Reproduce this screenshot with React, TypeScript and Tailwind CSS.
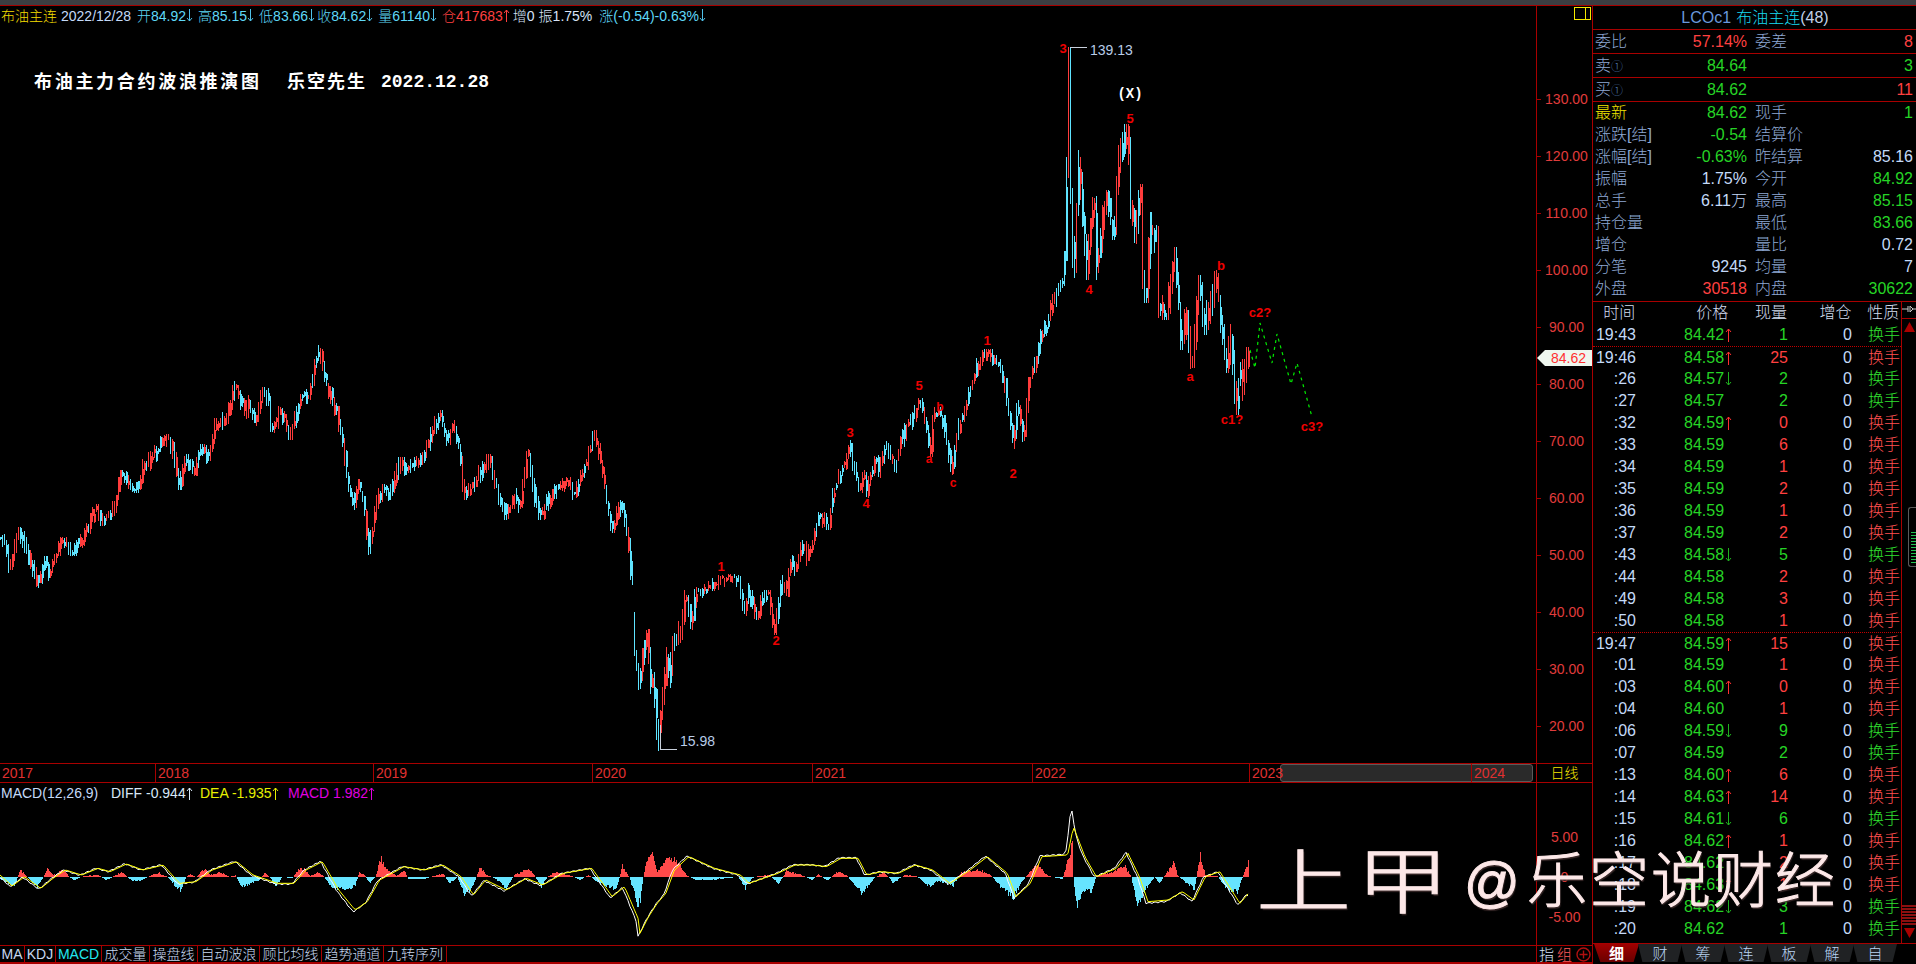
import React from "react";

type P = [number, number];

const pricePts: P[] = [
  [0,537],[8,547],[10,570],[20,530],[29,553],[39,585],[47,557],[50,575],[57,557],[63,540],[73,553],[84,540],[98,507],[104,523],[116,507],[122,473],[131,490],[141,490],[143,470],[157,453],[169,437],[175,453],[180,487],[188,457],[196,473],[202,447],[211,458],[216,423],[227,420],[237,383],[247,417],[249,400],[257,423],[263,390],[269,397],[273,432],[282,410],[291,437],[302,397],[310,397],[320,348],[327,383],[337,410],[345,447],[349,483],[355,507],[359,480],[365,503],[370,552],[378,503],[384,487],[390,497],[402,460],[408,470],[424,457],[441,413],[449,443],[455,423],[461,450],[465,497],[473,487],[490,457],[496,480],[506,517],[516,497],[521,510],[529,447],[535,493],[541,517],[555,490],[571,480],[575,497],[588,460],[596,433],[604,470],[608,503],[613,530],[623,500],[630,547],[633,582],
  [634,615],[636,650],[640,687],[648,633],[650,660],[647,697],[655,677],[659,748],[668,657],[672,675],[675,637],[682,630],[687,593],[692,627],[697,590],[703,593],[715,585],[723,578],[737,577],[740,580],[745,615],[750,593],[759,617],[763,593],[770,595],[776,632],[782,583],[787,593],[792,562],[795,572],[805,543],[808,558],[813,547],[820,515],[830,527],[833,500],[840,477],[847,462],[852,443],[853,457],[861,495],[865,468],[868,488],[877,455],[880,475],[887,443],[896,470],[902,443],[908,427],[923,401],[932,455],[933,420],[940,410],[947,433],[952,472],[960,427],[978,367],[987,352],[1002,367],[1007,393],[1015,448],[1018,403],[1025,443],[1030,383],[1037,363],[1042,332],[1048,327],[1052,307],[1058,293],[1062,287],[1065,280],[1067,227],[1070,47],[1071,157],[1075,287],[1080,160],[1088,277],[1095,187],[1098,270],[1107,193],[1115,237],[1120,153],[1129,127],[1132,203],[1136,240],[1142,187],[1143,277],[1148,300],[1151,228],[1158,237],[1160,310],[1168,317],[1176,250],[1183,347],[1188,313],[1193,370],[1200,278],[1205,332],[1213,297],[1217,273],[1222,317],[1227,370],[1232,337],[1238,412],[1241,367],[1244,393],[1248,350],
];

const histPts: P[] = [
  [0,-2],[14,-9],[20,7],[27,0],[37,-10],[43,0],[47,8],[53,2],[63,7],[69,0],[73,-3],[84,1],[98,2],[106,-3],[116,2],[122,5],[127,0],[131,-3],[141,-4],[151,2],[159,4],[167,0],[180,-14],[186,0],[190,3],[196,0],[204,8],[210,2],[220,5],[229,0],[235,2],[241,-10],[249,-7],[259,-3],[265,5],[271,-2],[275,-10],[282,0],[292,-1],[298,8],[304,8],[310,1],[318,5],[324,0],[331,-10],[339,-12],[347,-13],[355,-8],[359,5],[365,1],[369,-6],[375,0],[380,19],[386,8],[396,1],[404,7],[408,-2],[424,-2],[433,1],[443,3],[449,-7],[457,0],[465,-20],[473,-8],[480,11],[486,2],[492,0],[500,-5],[506,-12],[514,2],[522,5],[529,9],[535,0],[541,-10],[547,0],[555,5],[571,1],[580,-3],[588,2],[600,-7],[608,-10],[616,-12],[622,11],[629,0],[637,-27],[640,-22],[643,0],[646,15],[651,24],[657,5],[666,17],[674,18],[686,2],[695,-3],[709,-3],[726,-1],[738,0],[745,-11],[752,-1],[758,1],[769,2],[778,-7],[786,6],[801,2],[812,-3],[818,3],[827,-4],[838,6],[847,1],[861,-16],[870,-6],[875,0],[884,5],[893,-6],[904,2],[916,1],[930,-10],[936,-4],[941,-5],[953,-8],[961,5],[979,7],[990,2],[999,-8],[1013,-20],[1022,-4],[1036,13],[1048,1],[1062,-2],[1068,19],[1072,35],[1073,0],[1076,-30],[1082,-14],[1091,-15],[1096,1],[1108,4],[1125,10],[1131,0],[1137,-28],[1145,-12],[1154,0],[1159,-6],[1174,15],[1177,2],[1185,-5],[1194,-12],[1200,22],[1205,2],[1217,1],[1225,-10],[1237,-16],[1243,2],[1248,15],
];

const z4: P[] = [[0,345],[30,378],[60,350],[100,385],[130,355],[160,330],[200,345],[240,325],[270,335],[310,312],[350,330],[400,315],[440,370],[480,365],[520,330],[580,305],[620,345],[680,370],[720,370],[750,330],[790,305],[830,390],[870,450],[900,425],[930,360],[990,320],[1040,330],[1085,315],[1130,350],[1160,405],[1190,360],[1240,390],[1290,355],[1330,375],[1380,340],[1450,325],[1500,410],[1530,380],[1565,480]];
const z5: P[] = [[0,520],[15,470],[30,430],[45,400],[60,330],[85,290],[130,325],[175,345],[190,370],[240,340],[270,315],[300,315],[325,320],[350,295],[380,295],[395,345],[420,335],[450,340],[480,315],[510,330],[540,370],[575,330],[605,290],[640,340],[655,410],[680,370],[700,290],[745,285],[755,200],[775,290],[795,350],[830,325],[850,280],[870,350],[885,425],[920,420],[945,395],[965,420],[985,350],[1010,335],[1045,430],[1060,400]];
const deaPts: P[] = [
  ...z4.map(([a, b]): P => [a / 2.45, 760 + b / 3]),
  ...z5.map(([a, b]): P => [640 + a / 1.742, 760 + b / 3]),
];

function lerp(pts: P[], x: number): number {
  if (x <= pts[0][0]) return pts[0][1];
  for (let i = 1; i < pts.length; i++) {
    if (x <= pts[i][0]) {
      const [x0, y0] = pts[i - 1];
      const [x1, y1] = pts[i];
      return y0 + ((y1 - y0) * (x - x0)) / Math.max(x1 - x0, 0.001);
    }
  }
  return pts[pts.length - 1][1];
}

function rng(start: number) {
  let seed = start;
  return () => {
    seed = (seed * 1664525 + 1013904223) >>> 0;
    return seed / 4294967296;
  };
}

function makeCandles() {
  const rnd = rng(12345);
  let redW = "";
  let cyanW = "";
  let redB = "";
  let cyanB = "";
  for (let x = 0; x <= 1248; x += 2) {
    const c = lerp(pricePts, x);
    const next = x === 632 ? lerp(pricePts, 633) : lerp(pricePts, x + 2);
    let lo = Infinity;
    let hi = -Infinity;
    const left = x >= 634 ? Math.max(634, x - 8) : x - 8;
    const right = x < 634 ? Math.min(633, x + 8) : x + 8;
    for (let k = left; k <= right; k++) {
      const v = lerp(pricePts, k);
      if (v < lo) lo = v;
      if (v > hi) hi = v;
    }
    const amp = x > 1065 ? 20 : x > 640 && x < 700 ? 14 : 10;
    const isExtreme = x > 1060 && x < 1080;
    const up = Math.max(Math.min(c, next) - rnd() * amp, lo - (isExtreme ? 0 : 3));
    const dn = Math.min(Math.max(c, next) + rnd() * amp, hi + (isExtreme ? 0 : 3));
    const rising = next < c;
    const isRed = rnd() < (rising ? 0.68 : 0.3);
    const wick = `M${x + 0.5} ${up.toFixed(0)}V${dn.toFixed(0)}`;
    const m = up + (dn - up) * (0.3 + rnd() * 0.4);
    const h = (dn - up) * (0.15 + rnd() * 0.25);
    const body = rnd() < 0.7 ? `M${x + 1} ${(m - h).toFixed(0)}V${(m + h).toFixed(0)}` : "";
    if (isRed) {
      redW += wick;
      redB += body;
    } else {
      cyanW += wick;
      cyanB += body;
    }
  }
  return { redW, cyanW, redB, cyanB };
}

function makeHist() {
  const rnd = rng(777);
  let red = "";
  let cyan = "";
  for (let x = 0; x <= 1248; x++) {
    const base = lerp(histPts, x);
    const v = Math.round(base * (0.8 + rnd() * 0.4));
    if (v > 0) red += `M${x + 0.5} 877V${877 - v}`;
    else if (v < 0) cyan += `M${x + 0.5} 877V${877 - v}`;
  }
  return { red, cyan };
}

function makeLines() {
  let dea = "";
  let diff = "";
  for (let x = 0; x <= 1248; x += 2) {
    const d = lerp(deaPts, x);
    dea += `${x === 0 ? "M" : "L"}${x} ${d.toFixed(1)}`;
    const lead = lerp(deaPts, Math.min(x + 2, 1248));
    const bump = 16 * Math.exp(-((x - 1071) ** 2) / 12);
    const w = 877 + (lead - 877) * 1.05 - bump + (x % 6 === 0 ? 1 : 0);
    diff += `${x === 0 ? "M" : "L"}${x} ${w.toFixed(1)}`;
  }
  return { dea, diff };
}

const candles = makeCandles();
const hist = makeHist();
const lines = makeLines();

const marks: [string, number, number, number][] = [
  ["3", 1063, 48, 13], ["5", 1130, 118, 13], ["4", 1089, 289, 13], ["b", 1221, 265, 13], ["c2?", 1260, 312, 13],
  ["a", 1190, 376, 13], ["c1?", 1232, 419, 13], ["c3?", 1312, 426, 13], ["1", 721, 566, 13], ["2", 776, 640, 13],
  ["3", 850, 432, 13], ["4", 866, 503, 13], ["a", 929, 458, 12], ["c", 953, 482, 12], ["2", 1013, 473, 13],
  ["5", 919, 385, 13], ["b", 940, 406, 12], ["1", 987, 340, 13],
];

const R = "text-[#ff4040]";
const G = "text-[#26d426]";
const B = "text-[#c4daf8]";
const L = "text-[#8ea8d4]";

function Arr({ dir, color, h = 13 }: { dir: "u" | "d"; color: string; h?: number }) {
  return (
    <svg className="inline-block shrink-0 align-[-2px]" width={7} height={h} viewBox={`0 0 7 ${h}`} fill="none" stroke={color} strokeWidth={1}>
      {dir === "u" ? (
        <path d={`M3.5 ${h}V1M1 4L3.5 1L6 4`} />
      ) : (
        <path d={`M3.5 0V${h - 1}M1 ${h - 4}L3.5 ${h - 1}L6 ${h - 4}`} />
      )}
    </svg>
  );
}

function QuoteRow({ a, b, ac = L, bc = B, c, d, dc = B, cc = L }: { a: React.ReactNode; b?: string; ac?: string; bc?: string; c?: string; d?: string; dc?: string; cc?: string }) {
  return (
    <div className="flex h-[22px] items-center pl-[2px] pr-[4px] text-[16px]">
      <div className="flex w-[152px] justify-between">
        <span className={ac}>{a}</span>
        <span className={bc}>{b}</span>
      </div>
      <div className="ml-[8px] flex flex-1 justify-between">
        <span className={cc}>{c}</span>
        <span className={dc}>{d}</span>
      </div>
    </div>
  );
}

function BandRow({ a, b, bc, d, dc, c }: { a: React.ReactNode; b: string; bc: string; d: string; dc: string; c?: string }) {
  return (
    <div className="flex h-[24px] items-center border-b border-[#a80000] pl-[2px] pr-[4px] text-[16px]">
      <div className="flex w-[152px] justify-between">
        <span className={L}>{a}</span>
        <span className={bc}>{b}</span>
      </div>
      <div className="ml-[8px] flex flex-1 justify-between">
        <span className={L}>{c}</span>
        <span className={dc}>{d}</span>
      </div>
    </div>
  );
}

type Tick = [string, string, "u" | "d" | "", string, boolean, boolean?];
const ticks: Tick[] = [
  ["19:43", "84.42", "u", "1", false],
  ["19:46", "84.58", "u", "25", true, true],
  [":26", "84.57", "d", "2", false],
  [":27", "84.57", "", "2", false],
  [":32", "84.59", "u", "0", true],
  [":33", "84.59", "", "6", true],
  [":34", "84.59", "", "1", true],
  [":35", "84.59", "", "2", true],
  [":36", "84.59", "", "1", true],
  [":37", "84.59", "", "2", true],
  [":43", "84.58", "d", "5", false],
  [":44", "84.58", "", "2", true],
  [":49", "84.58", "", "3", true],
  [":50", "84.58", "", "1", true],
  ["19:47", "84.59", "u", "15", true, true],
  [":01", "84.59", "", "1", true],
  [":03", "84.60", "u", "0", true],
  [":04", "84.60", "", "1", true],
  [":06", "84.59", "d", "9", false],
  [":07", "84.59", "", "2", false],
  [":13", "84.60", "u", "6", true],
  [":14", "84.63", "u", "14", true],
  [":15", "84.61", "d", "6", false],
  [":16", "84.62", "u", "1", true],
  [":17", "84.62", "", "2", true],
  [":18", "84.63", "u", "1", true],
  [":19", "84.62", "d", "3", false],
  [":20", "84.62", "", "1", false],
];

function TickRow({ t }: { t: Tick }) {
  const [time, price, arrow, vol, red, dotted] = t;
  return (
    <div className={`flex h-[22px] items-center text-[16px] ${dotted ? "border-t border-dotted border-[#c00000]" : ""}`}>
      <span className={`w-[43px] text-right ${B}`}>{time}</span>
      <span className={`ml-[48px] flex w-[58px] items-center ${G}`}>
        {price}
        {arrow === "u" && <span className="ml-[1px] flex"><Arr dir="u" color="#ff3030" h={14} /></span>}
        {arrow === "d" && <span className="ml-[1px] flex"><Arr dir="d" color="#1fb01f" h={14} /></span>}
      </span>
      <span className={`w-[46px] text-right ${red ? R : G}`}>{vol}</span>
      <span className={`w-[64px] text-right ${B}`}>0</span>
      <span className={`ml-[16px] w-[32px] whitespace-nowrap ${red ? "text-[#ff5050]" : "text-[#30e030]"}`}>换手</span>
    </div>
  );
}

function Head({ label, value, vc = "text-[#5fd8f8]", lc = "text-[#5fd8f8]", arrow, ac = "#4fc0e8", ml = "" }: { label: string; value: string; vc?: string; lc?: string; arrow?: "u" | "d"; ac?: string; ml?: string }) {
  return (
    <span className={`flex items-center whitespace-nowrap ${ml}`}>
      <span className={lc}>{label}</span>
      <span className={vc}>{value}</span>
      {arrow && <Arr dir={arrow} color={ac} />}
    </span>
  );
}

const years: [string, string][] = [
  ["2017", "w-[156px]"], ["2018", "w-[218px]"], ["2019", "w-[219px]"], ["2020", "w-[220px]"],
  ["2021", "w-[220px]"], ["2022", "w-[217px]"], ["2023", "w-[222px]"], ["2024", "flex-1"],
];

const bottomTabs: [string, string, string?][] = [
  ["MA", "w-[25px]"], ["KDJ", "w-[31px]"], ["MACD", "w-[46px]", "text-[#22e8f0]"], ["成交量", "w-[48px]"], ["操盘线", "w-[48px]"],
  ["自动波浪", "w-[62px]"], ["顾比均线", "w-[62px]"], ["趋势通道", "w-[62px]"], ["九转序列", "w-[63px]"],
];

export default function App() {
  return (
    <div className="relative flex h-[964px] w-[1916px] flex-col overflow-hidden bg-black font-['Liberation_Sans','Noto_Sans_CJK_SC',sans-serif] text-[14px] font-light leading-none">
      <div className="h-[5px] shrink-0 bg-[#3b3e42]" />
      <div className="flex flex-1 border-t border-[#a80000]">
        {/* left */}
        <div className="flex w-[1592px] shrink-0 flex-col">
          <div className="flex h-[757px]">
            <div className="relative w-[1536px] shrink-0">
              <svg className="absolute left-0 top-0" width={1536} height={757} viewBox="0 6 1536 757">
                <g shapeRendering="crispEdges" fill="none">
                  <path d={candles.redW} stroke="#ff3c3c" strokeWidth={1} />
                  <path d={candles.cyanW} stroke="#5fe4ff" strokeWidth={1} />
                  <path d={candles.redB} stroke="#ff3c3c" strokeWidth={2} />
                  <path d={candles.cyanB} stroke="#5fe4ff" strokeWidth={2} />
                  <path d="M1070 47H1087" stroke="#c8d0dc" strokeWidth={1} />
                  <path d="M660 749H677M660 749V725" stroke="#c8d0dc" strokeWidth={1} />
                </g>
                <polyline points="1250,350 1255,368 1260,323 1272,363 1277,334 1291,384 1297,363 1312,417" fill="none" stroke="#00ea00" strokeWidth={1.2} strokeDasharray="3 4" />
                {marks.map(([t, x, y, s], i) => (
                  <text key={i} x={x} y={y + 5} textAnchor="middle" fontSize={s} fontWeight={700} fill="#f00000" fontFamily="'Liberation Sans',sans-serif">{t}</text>
                ))}
                <text x={1130} y={98} textAnchor="middle" fontSize={14} fontWeight={700} fill="#ffffff" fontFamily="'Liberation Mono',monospace">(X)</text>
                <text x={1090} y={55} fontSize={14} fill="#b8cce8" fontFamily="'Liberation Sans',sans-serif">139.13</text>
                <text x={680} y={746} fontSize={14} fill="#b8cce8" fontFamily="'Liberation Sans',sans-serif">15.98</text>
              </svg>
              <div className="relative flex h-[19px] items-center pl-[1px]">
                <Head label="布油主连" value="" lc="text-[#f2dc00]" />
                <span className={`ml-[4px] w-[76px] ${B}`}>2022/12/28</span>
                <Head label="开" value="84.92" arrow="d" />
                <Head label="高" value="85.15" arrow="d" ml="ml-[5px]" />
                <Head label="低" value="83.66" arrow="d" ml="ml-[5px]" />
                <Head label="收" value="84.62" arrow="d" ml="ml-[2px]" />
                <Head label="量" value="61140" arrow="d" ml="ml-[5px]" />
                <Head label="仓" value="417683" lc="text-[#ff4040]" vc="text-[#ff4040]" arrow="u" ac="#ff4040" ml="ml-[5px]" />
                <Head label="增" value="0" lc="text-[#d8e4f8]" vc="text-[#d8e4f8]" ml="ml-[3px]" />
                <Head label="振" value="1.75%" lc="text-[#d8e4f8]" vc="text-[#d8e4f8]" ml="ml-[4px]" />
                <Head label="涨" value="(-0.54)-0.63%" arrow="d" ml="ml-[7px]" />
              </div>
              <div className="relative ml-[34px] mt-[47px] flex h-[20px] items-center whitespace-nowrap text-[18px] font-bold text-white">
                <span className="w-[253px] tracking-[2.7px]">布油主力合约波浪推演图</span>
                <span className="w-[94px] tracking-[2px]">乐空先生</span>
                <span className="font-['Liberation_Mono',monospace]">2022.12.28</span>
              </div>
            </div>
            <div className="relative flex flex-1 flex-col border-l border-[#a80000] text-[14px] text-[#e03c3c]">
              <div className="flex h-[64.5px] justify-end pr-[1px] pt-[1px]">
                <div className="flex h-[13px] w-[17px] justify-end border border-[#f5e600]">
                  <div className="h-full w-[5px] border-l border-[#f5e600]" />
                </div>
              </div>
              {["130.00", "120.00", "110.00", "100.00", "90.00", "80.00", "70.00", "60.00", "50.00", "40.00", "30.00", "20.00"].map((t) => (
                <div key={t} className="flex h-[57px] shrink-0 items-center">
                  <div className="h-px w-[4px] bg-[#a80000]" />
                  <span className="flex-1 text-center">{t}</span>
                </div>
              ))}
              <div className="absolute left-0 top-[344px] flex h-[16px] w-[55px] items-center justify-center bg-[#eef6ee] pl-[8px] text-[14px] text-[#ff3030] [clip-path:polygon(0_50%,8px_0,100%_0,100%_100%,8px_100%)]">84.62</div>
            </div>
          </div>
          {/* time axis */}
          <div className="relative flex h-[20px] shrink-0 border-y border-[#a80000]">
            <div className="relative flex w-[1536px] shrink-0 overflow-hidden">
              <div className="absolute right-[3px] top-0 h-[18px] w-[253px] rounded-[3px] border border-[#5a5a5a] bg-[#2a2a2a]" />
              {years.map(([y, w], i) => (
                <span key={y} className={`relative flex items-center pl-[2px] text-[14px] text-[#e03030] ${w} ${i < 7 ? "border-r border-[#a80000]" : ""}`}>{y}</span>
              ))}
            </div>
            <div className="flex flex-1 items-center justify-center border-l border-[#a80000] text-[14px] text-[#f5e600]">日线</div>
          </div>
          {/* macd */}
          <div className="flex h-[162px] shrink-0">
            <div className="relative w-[1536px] shrink-0">
              <svg className="absolute left-0 top-0" width={1536} height={162} viewBox="0 783 1536 162">
                <g shapeRendering="crispEdges" fill="none" strokeWidth={1}>
                  <path d={hist.red} stroke="#ff4a4a" />
                  <path d={hist.cyan} stroke="#66e4ff" />
                </g>
                <path d={lines.diff} fill="none" stroke="#ffffff" strokeWidth={1} />
                <path d={lines.dea} fill="none" stroke="#ffff00" strokeWidth={1} />
              </svg>
              <div className="relative flex h-[20px] items-center pl-[1px] text-[14px]">
                <span className={`w-[110px] ${B}`}>MACD(12,26,9)</span>
                <span className="flex w-[89px] items-center whitespace-nowrap text-[#d8e8f8]">DIFF -0.944<Arr dir="u" color="#d8e8f8" /></span>
                <span className="flex w-[88px] items-center whitespace-nowrap text-[#e6f000]">DEA -1.935<Arr dir="u" color="#e6f000" /></span>
                <span className="flex items-center whitespace-nowrap text-[#e000e0]">MACD 1.982<Arr dir="u" color="#e000e0" /></span>
              </div>
            </div>
            <div className="flex flex-1 flex-col border-l border-[#a80000] text-[14px] text-[#e03c3c]">
              <div className="mt-[46px] flex h-[16px] shrink-0 items-center justify-center">5.00</div>
              <div className="mt-[24px] flex h-[16px] shrink-0 items-center justify-center">0</div>
              <div className="mt-[24px] flex h-[16px] shrink-0 items-center justify-center">-5.00</div>
            </div>
          </div>
          {/* bottom tabs */}
          <div className="flex h-[18px] shrink-0 border-y border-[#a80000]">
            <div className="flex w-[1536px] shrink-0">
              {bottomTabs.map(([t, w, c]) => (
                <span key={t} className={`flex items-center justify-center border-r border-[#a80000] text-[14px] ${w} ${c ?? "text-[#c8d8f0]"}`}>{t}</span>
              ))}
            </div>
            <div className="flex flex-1 items-center border-l border-[#a80000] pl-[2px] text-[15px]">
              <span className="text-[#d8e4f8]">指</span>
              <span className="ml-[3px] text-[#ff5a5a]">组</span>
              <svg className="ml-[4px]" width={15} height={15} viewBox="0 0 15 15" fill="none" stroke="#b01010" strokeWidth={1.4}>
                <circle cx={7.5} cy={7.5} r={6.5} />
                <path d="M3.5 7.5H11.5M7.5 3.5V11.5" />
              </svg>
            </div>
          </div>
          <div className="h-[1px] shrink-0 bg-[#a80000]" />
        </div>

        {/* right */}
        <div className="flex flex-1 flex-col border-l border-[#a80000]">
          <div className="flex h-[24px] shrink-0 items-center justify-center border-b border-[#a80000] text-[16px]">
            <span className="text-[#6a98dc]">LCOc1</span>
            <span className="ml-[5px] text-[#18d8f0]">布油主连</span>
            <span className="text-[#c0d0e8]">(48)</span>
          </div>
          <BandRow a="委比" b="57.14%" bc={R} c="委差" d="8" dc={R} />
          <BandRow a={<>卖<span className="text-[12px] text-[#4f78b0]">①</span></>} b="84.64" bc={G} d="3" dc={G} />
          <BandRow a={<>买<span className="text-[12px] text-[#4f78b0]">①</span></>} b="84.62" bc={G} d="11" dc={R} />
          <div className="flex h-[200px] shrink-0 flex-col border-b border-[#a80000]">
            <QuoteRow a="最新" ac="text-[#f5e600]" b="84.62" bc={G} c="现手" d="1" dc={G} />
            <QuoteRow a="涨跌[结]" b="-0.54" bc={G} c="结算价" />
            <QuoteRow a="涨幅[结]" b="-0.63%" bc={G} c="昨结算" d="85.16" />
            <QuoteRow a="振幅" b="1.75%" c="今开" d="84.92" dc={G} />
            <QuoteRow a="总手" b="6.11万" c="最高" d="85.15" dc={G} />
            <QuoteRow a="持仓量" c="最低" d="83.66" dc={G} />
            <QuoteRow a="增仓" c="量比" d="0.72" />
            <QuoteRow a="分笔" b="9245" c="均量" d="7" />
            <QuoteRow a="外盘" b="30518" bc={R} c="内盘" d="30622" dc={G} />
          </div>
          <div className="flex flex-1">
            <div className="w-[308px] shrink-0">
              <div className="flex h-[22px] items-center text-[16px] text-[#d4def0]">
                <span className="w-[53px] text-center">时间</span>
                <span className="ml-[46px] w-[42px] text-center">价格</span>
                <span className="ml-[17px] w-[42px] text-center">现量</span>
                <span className="ml-[23px] w-[42px] text-center">增仓</span>
                <span className="ml-[11px] w-[34px] whitespace-nowrap">性质</span>
              </div>
              {ticks.map((t, i) => (
                <TickRow key={i} t={t} />
              ))}
            </div>
            <div className="flex flex-1 flex-col items-center border-l border-[#a80000]">
              <svg className="mt-[2px]" width={15} height={10} viewBox="0 0 15 10" fill="none" stroke="#c8c8c8" strokeWidth={1}>
                <path d="M0 5H6M6 2V8M8 2L11 5L8 8V2M11 5H15" />
              </svg>
              <div className="mt-[4px] w-full border-t border-[#a80000]" />
              <svg className="mt-[3px]" width={11} height={10} viewBox="0 0 11 10"><path d="M5.5 0L11 10H0Z" fill="#a80000" /></svg>
              <div className="mt-[175px] flex h-[60px] w-[9px] flex-col gap-[2px] self-end rounded-l-[3px] border border-r-0 border-[#5a5a5a] pl-[2px] pt-[24px]">
                {Array.from({ length: 11 }).map((_, i) => (
                  <div key={i} className="h-px w-full shrink-0 bg-[#22c050]" />
                ))}
              </div>
              <div className="mt-[338px] flex h-[20px] w-full flex-col gap-[1px]">
                {Array.from({ length: 7 }).map((_, i) => (
                  <div key={i} className="h-[2px] shrink-0 bg-[#8a1010]" />
                ))}
              </div>
              <svg className="mt-[3px]" width={11} height={10} viewBox="0 0 11 10"><path d="M0 0H11L5.5 10Z" fill="#a80000" /></svg>
            </div>
          </div>
          <div className="flex h-[19px] shrink-0 border-t border-[#a80000] pl-[1px] text-[15px]">
            <span className="mr-[-1px] flex w-[45px] items-center justify-center bg-gradient-to-b from-[#a00000] to-[#6a0000] font-bold text-white [clip-path:polygon(0_0,100%_0,88%_100%,14%_100%)]">细</span>
            {["财", "筹", "连", "板", "解", "自"].map((t) => (
              <span key={t} className="mr-[-1px] flex w-[44px] items-center justify-center bg-[#202224] text-[#b8d4f4] [clip-path:polygon(0_0,100%_0,90%_100%,10%_100%)]">{t}</span>
            ))}
          </div>
          <div className="h-[2px] shrink-0" />
        </div>
      </div>

      {/* watermark */}
      <div className="pointer-events-none absolute left-[1256px] top-[843px] flex h-[78px] items-center whitespace-nowrap text-[60px] leading-none text-[#fde8e8] [-webkit-text-stroke:1px_#fde8e8] [text-shadow:1px_2px_1px_rgba(70,50,50,0.8)]">
        <span className="w-[100px] origin-left scale-x-[1.4] text-[68px]">上</span>
        <span className="w-[108px] origin-left scale-x-[1.3] text-[72px]">甲</span>
        <span className="w-[63px] text-[55px]">@</span>
        <span className="tracking-[2px]">乐空说财经</span>
      </div>
    </div>
  );
}
